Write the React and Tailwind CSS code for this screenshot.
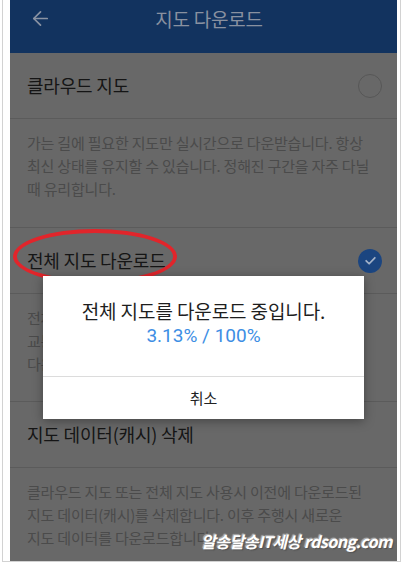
import React from 'react';
import { ArrowLeft } from 'lucide-react';

const font = "font-['Noto_Sans_CJK_KR','Noto_Sans',sans-serif]";

const Row = ({ title, mark }) => (
  <div className="h-[66px] flex items-center justify-between pl-[17px] pr-[15px] border-b border-[#5b5b5b]">
    <span className="text-[18px] text-[#151515] tracking-[-0.2px]">{title}</span>
    {mark === 'checked' && (
      <div className="w-[24px] h-[24px] rounded-full bg-[#1b4580] flex items-center justify-center">
        <svg width="13" height="13" viewBox="0 0 24 24" fill="none" stroke="#a3b2c8" strokeWidth="3.2" strokeLinecap="round" strokeLinejoin="round">
          <polyline points="4 12.5 9.5 18 20 7" />
        </svg>
      </div>
    )}
    {mark === 'empty' && <div className="w-[24px] h-[24px] rounded-full border-[1.5px] border-[#575757]" />}
  </div>
);

const Desc = ({ lines, className = '' }) => (
  <div className={`pl-[17px] pr-[12px] pt-[12px] text-[15px] leading-[23px] text-[#4b4b4b] tracking-[-0.2px] ${className}`}>
    {lines.map((l, i) => (
      <div key={i} className="whitespace-nowrap">{l}</div>
    ))}
  </div>
);

export default function App() {
  return (
    <div className={`w-[403px] h-[564px] bg-white px-[2px] ${font}`}>
      <div className="h-[562px] border-x border-b border-[#d2d2d2] pl-[7px] pr-[3px]">
        <div className="relative h-full bg-[#686868] overflow-hidden">
          {/* header */}
          <div className="h-[53px] bg-[#12335f] flex items-start pt-[8px] pl-[19px] pr-[31px]">
            <ArrowLeft size={23} strokeWidth={1.8} className="text-[#8a93a3] mt-[-1px]" />
            <div className="flex-1 text-center text-[19px] leading-[22px] text-[#8991a0] tracking-[-0.2px]">지도 다운로드</div>
          </div>

          <Row title="클라우드 지도" mark="empty" />
          <Desc
            className="h-[109px] border-b border-[#5b5b5b]"
            lines={[
              '가는 길에 필요한 지도만 실시간으로 다운받습니다. 항상',
              '최신 상태를 유지할 수 있습니다. 정해진 구간을 자주 다닐',
              '때 유리합니다.',
            ]}
          />
          <Row title="전체 지도 다운로드" mark="checked" />
          <Desc
            className="h-[108px] border-b border-[#5b5b5b]"
            lines={[
              '전체 지도를 미리 다운로드합니다. 데이터 사용',
              '교통 정보 외에는 데이터를 사용하지 않습니다',
              '다운로드에 시간이 걸릴 수 있습니다.',
            ]}
          />
          <Row title="지도 데이터(캐시) 삭제" />
          <Desc
            lines={[
              '클라우드 지도 또는 전체 지도 사용시 이전에 다운로드된',
              '지도 데이터(캐시)를 삭제합니다. 이후 주행시 새로운',
              '지도 데이터를 다운로드합니다.',
            ]}
          />

          {/* red annotation */}
          <div className="absolute left-[3px] top-[229px] w-[164px] h-[55px] rounded-[50%] border-[4px] border-[#e1252b]" />

          {/* dialog */}
          <div className="absolute left-[33px] top-[276px] w-[321px] h-[143px] bg-white flex flex-col shadow-[0_2px_10px_rgba(0,0,0,0.35)]">
            <div className="h-[100px] flex flex-col items-center pt-[22px]">
              <div className="text-[19px] leading-[25px] text-[#1e1e1e] tracking-[-0.1px]">전체 지도를 다운로드 중입니다.</div>
              <div className="text-[19px] leading-[25px] text-[#3d8ee4] font-['Roboto','Noto_Sans',sans-serif]">3.13% / 100%</div>
            </div>
            <div className="flex-1 border-t border-[#dcdcdc] flex items-center justify-center text-[15px] text-[#222]">취소</div>
          </div>

          {/* watermark */}
          <div className="absolute right-[5px] bottom-[9px] text-[16px] leading-[22px] font-bold italic text-white tracking-[-0.5px] [text-shadow:0_0_2px_#8a8a8a,1px_1px_1px_#444,-1px_-1px_1px_#bdbdbd]">
            알송달송IT세상 rdsong.com
          </div>
        </div>
      </div>
    </div>
  );
}
